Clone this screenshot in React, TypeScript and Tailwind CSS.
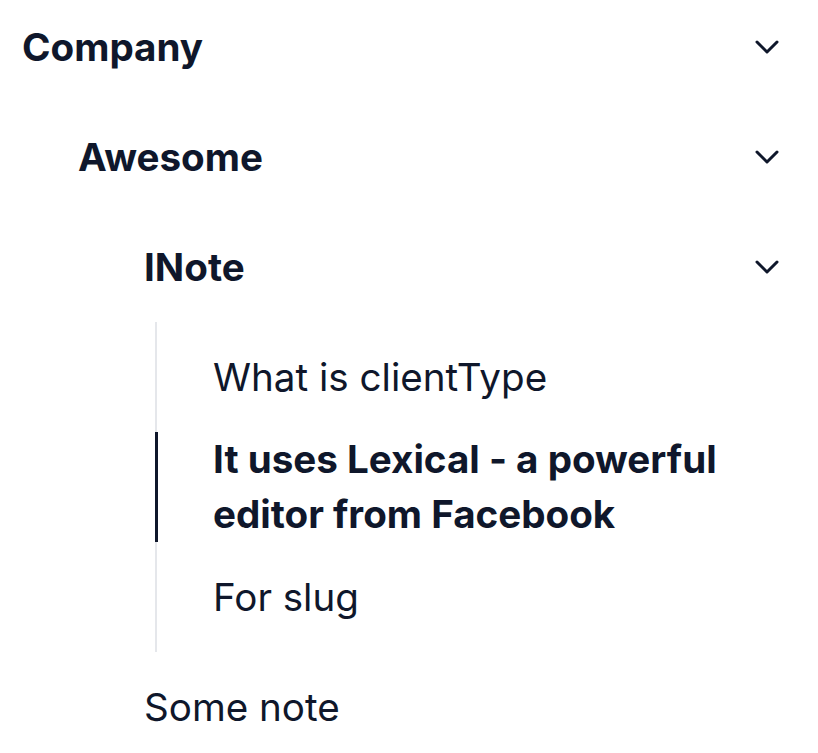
import React from "react";
import { ChevronDown } from "lucide-react";

type Leaf = { title: string; active?: boolean };

const notes: Leaf[] = [
  { title: "What is clientType" },
  { title: "It uses Lexical - a powerful editor from Facebook", active: true },
  { title: "For slug" },
];

function FolderRow({ title, indent }: { title: string; indent: string }) {
  return (
    <button type="button" className={`flex w-full items-center justify-between py-[27.5px] pr-[31px] text-left ${indent}`}>
      <span className="font-bold">{title}</span>
      <ChevronDown size={40} strokeWidth={1.8} className="text-slate-900" />
    </button>
  );
}

export default function App() {
  return (
    <div
      className="-mt-2 min-h-screen bg-white text-[38.6px] leading-[55px] text-slate-900"
      style={{ fontFamily: "Inter, 'Noto Sans', sans-serif" }}
    >
      <FolderRow title="Company" indent="pl-[22px]" />
      <FolderRow title="Awesome" indent="pl-[78px]" />
      <FolderRow title="INote" indent="pl-[144px]" />

      <ul className="ml-[155px] flex flex-col gap-[27.5px] border-l-[2.5px] border-gray-200 py-[27.5px] pr-[31px]">
        {notes.map((n) => (
          <li key={n.title}>
            <a
              href="#"
              className={`-ml-[2.5px] block border-l-[3px] pl-[55.5px] ${
                n.active ? "border-slate-900 font-bold" : "border-transparent font-normal"
              }`}
            >
              {n.title}
            </a>
          </li>
        ))}
      </ul>

      <div className="py-[27.5px] pl-[144px]">Some note</div>
    </div>
  );
}
